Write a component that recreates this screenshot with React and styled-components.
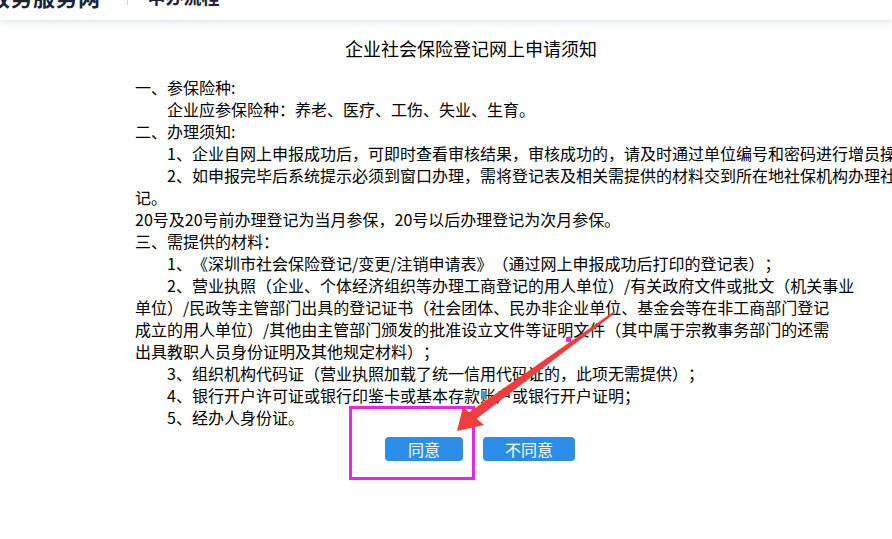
import React from "react";
import styled, {createGlobalStyle} from "styled-components";

const GlobalStyle = createGlobalStyle`
    html, body {
        margin: 0;
        padding: 0;
        background: #fff;
        overflow: hidden;
    }
    body {
        font-family: "Noto Sans CJK SC", "Liberation Sans", sans-serif;
        color: #000;
        text-spacing-trim: space-all;
    }
`;

const Page = styled.div`
    position: relative;
    width: 892px;
    height: 539px;
    overflow: hidden;
`;

const Header = styled.header`
    height: 48px;
    margin-top: -28px;
    display: flex;
    align-items: center;
    background: #fff;
    box-shadow: 0 2px 6px rgba(40, 60, 90, 0.14);
    position: relative;
    z-index: 1;
`;

const Logo = styled.div`
    margin-left: -12px;
    font-size: 22px;
    font-weight: 700;
    color: #1b2535;
    letter-spacing: 0.5px;
`;

const Divider = styled.span`
    width: 1px;
    height: 18px;
    background: #cfd3d8;
    margin: 0 20px 0 26px;
`;

const SubTitle = styled.div`
    font-size: 18px;
    font-weight: 700;
    color: #1b2535;
`;

const Main = styled.main`
    margin-left: 135px;
    width: 672px;
    padding-top: 16px;
`;

const Title = styled.h1`
    margin: 0;
    font-size: 18px;
    font-weight: 400;
    line-height: 24px;
    text-align: center;
`;

const Notice = styled.div`
    margin-top: 16px;
`;

const Line = styled.div`
    font-size: 16px;
    line-height: 22px;
    white-space: nowrap;
    text-spacing-trim: space-all;
    font-feature-settings: "fwid" 0;
    padding-left: ${props => props.indent ? "32px" : "0"};
`;

const ButtonRow = styled.div`
    display: flex;
    gap: 20px;
    margin: 9px 0 0 250px;
`;

const Button = styled.button`
    height: 24px;
    width: ${props => props.w}px;
    padding: 0;
    border: none;
    border-radius: 4px;
    background: #2b8de8;
    color: #fff;
    font-family: inherit;
    font-size: 16px;
    line-height: 24px;
    cursor: pointer;
`;

const Annotation = styled.svg`
    position: absolute;
    left: 0;
    top: 0;
    pointer-events: none;
`;

const lines = [
    [false, "一、参保险种:"],
    [true, "企业应参保险种：养老、医疗、工伤、失业、生育。"],
    [false, "二、办理须知:"],
    [true, "1、企业自网上申报成功后，可即时查看审核结果，审核成功的，请及时通过单位编号和密码进行增员操作。"],
    [true, "2、如申报完毕后系统提示必须到窗口办理，需将登记表及相关需提供的材料交到所在地社保机构办理社会保险登"],
    [false, "记。"],
    [false, "20号及20号前办理登记为当月参保，20号以后办理登记为次月参保。"],
    [false, "三、需提供的材料："],
    [true, "1、《深圳市社会保险登记/变更/注销申请表》（通过网上申报成功后打印的登记表）；"],
    [true, "2、营业执照（企业、个体经济组织等办理工商登记的用人单位）/有关政府文件或批文（机关事业"],
    [false, "单位）/民政等主管部门出具的登记证书（社会团体、民办非企业单位、基金会等在非工商部门登记"],
    [false, "成立的用人单位）/其他由主管部门颁发的批准设立文件等证明文件（其中属于宗教事务部门的还需"],
    [false, "出具教职人员身份证明及其他规定材料）；"],
    [true, "3、组织机构代码证（营业执照加载了统一信用代码证的，此项无需提供）；"],
    [true, "4、银行开户许可证或银行印鉴卡或基本存款账户或银行开户证明；"],
    [true, "5、经办人身份证。"],
];

const App = () => {
    return (
        <Page>
            <GlobalStyle/>
            <Header>
                <Logo>政务服务网</Logo>
                <Divider/>
                <SubTitle>申办流程</SubTitle>
            </Header>
            <Main>
                <Title>企业社会保险登记网上申请须知</Title>
                <Notice>
                    {lines.map(([indent, text], i) =>
                        <Line key={i} indent={indent}>{text}</Line>
                    )}
                </Notice>
                <ButtonRow>
                    <Button w={78}>同意</Button>
                    <Button w={92}>不同意</Button>
                </ButtonRow>
            </Main>
            <Annotation width="892" height="539">
                <rect x="350.5" y="407.5" width="123" height="71" fill="none" stroke="#ee22ee" strokeWidth="3"/>
                <rect x="566" y="337" width="5" height="5" fill="#ee22ee"/>
                <polygon points="613,312 614,314 475,420 468,413" fill="#f03c3c"/>
                <polygon points="457,431 463,407 484,425" fill="#f03c3c"/>
            </Annotation>
        </Page>
    );
};

export default App;
